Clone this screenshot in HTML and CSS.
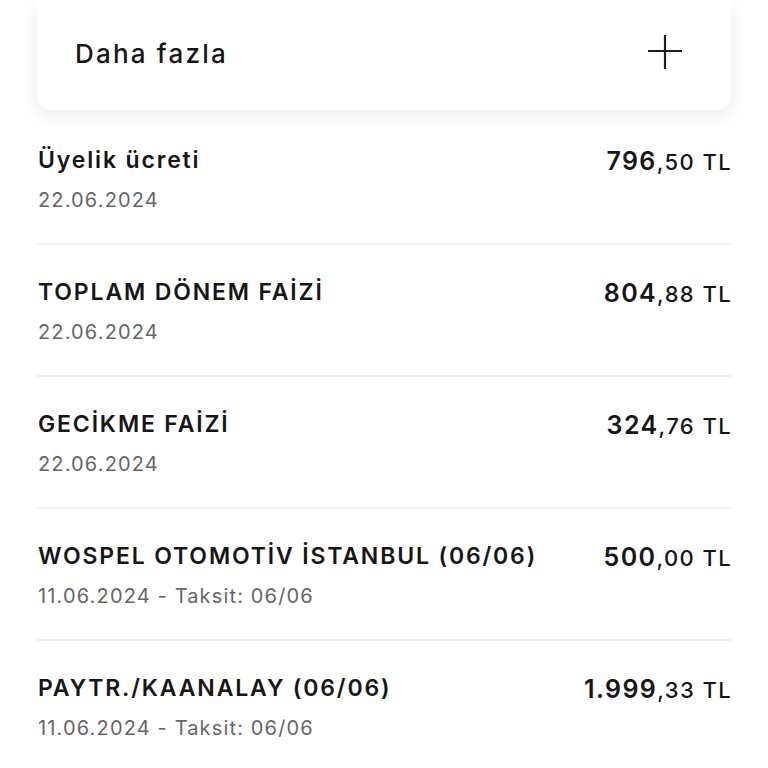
FILE: index.html
```html
<!DOCTYPE html>
<html lang="tr">
<head>
<meta charset="utf-8">
<link rel="stylesheet" href="styles.css">
</head>
<body>
<div class="page">
  <div class="card">
    <span class="card-title">Daha fazla</span>
    <svg class="plus" width="36" height="36" viewBox="0 0 36 36"><path d="M18 1V35M1 17H35" stroke="#1c1c1c" stroke-width="2.2" fill="none"/></svg>
  </div>
  <div class="list">
    <div class="row">
      <div class="info"><div class="title">Üyelik ücreti</div><div class="date">22.06.2024</div></div>
      <div class="amount"><span class="int">796</span><span class="dec">,50 TL</span></div>
    </div>
    <div class="row">
      <div class="info"><div class="title">TOPLAM DÖNEM FAİZİ</div><div class="date">22.06.2024</div></div>
      <div class="amount"><span class="int">804</span><span class="dec">,88 TL</span></div>
    </div>
    <div class="row">
      <div class="info"><div class="title">GECİKME FAİZİ</div><div class="date">22.06.2024</div></div>
      <div class="amount"><span class="int">324</span><span class="dec">,76 TL</span></div>
    </div>
    <div class="row">
      <div class="info"><div class="title">WOSPEL OTOMOTİV İSTANBUL (06/06)</div><div class="date">11.06.2024 - Taksit: 06/06</div></div>
      <div class="amount"><span class="int">500</span><span class="dec">,00 TL</span></div>
    </div>
    <div class="row">
      <div class="info"><div class="title">PAYTR./KAANALAY (06/06)</div><div class="date">11.06.2024 - Taksit: 06/06</div></div>
      <div class="amount"><span class="int">1.999</span><span class="dec">,33 TL</span></div>
    </div>
  </div>
</div>
</body>
</html>
```

FILE: styles.css
```css
html, body {
  margin: 0;
  padding: 0;
  background: #ffffff;
}
body {
  font-family: "Inter", "Noto Sans", sans-serif;
  color: #161616;
  overflow: hidden;
}
.page {
  padding: 0 37px 0 37px;
}
.card {
  height: 110px;
  box-sizing: border-box;
  background: #fff;
  border-radius: 0 0 14px 14px;
  box-shadow: 0 6px 18px rgba(0, 0, 0, 0.08);
  display: flex;
  align-items: center;
  justify-content: space-between;
  padding: 0 48px 4px 38px;
}
.card-title {
  font-size: 26px;
  font-weight: 500;
  letter-spacing: 2.2px;
}
.plus {
  display: block;
  margin-top: -3px;
}
.list {
  padding-top: 3px;
}
.row {
  display: flex;
  justify-content: space-between;
  align-items: flex-start;
  padding: 32px 0 28px 1px;
  border-bottom: 2px solid #efefef;
}
.title {
  font-size: 23px;
  line-height: 30px;
  font-weight: 600;
  letter-spacing: 1.85px;
}
.date {
  margin-top: 10px;
  font-size: 20px;
  line-height: 30px;
  color: #666;
  letter-spacing: 1.15px;
}
.amount {
  line-height: 30px;
  white-space: nowrap;
  margin-top: 1px;
  letter-spacing: 1.4px;
  margin-right: -1px;
}
.int {
  font-size: 25px;
  font-weight: 600;
}
.dec {
  font-size: 22px;
  font-weight: 500;
}
```
